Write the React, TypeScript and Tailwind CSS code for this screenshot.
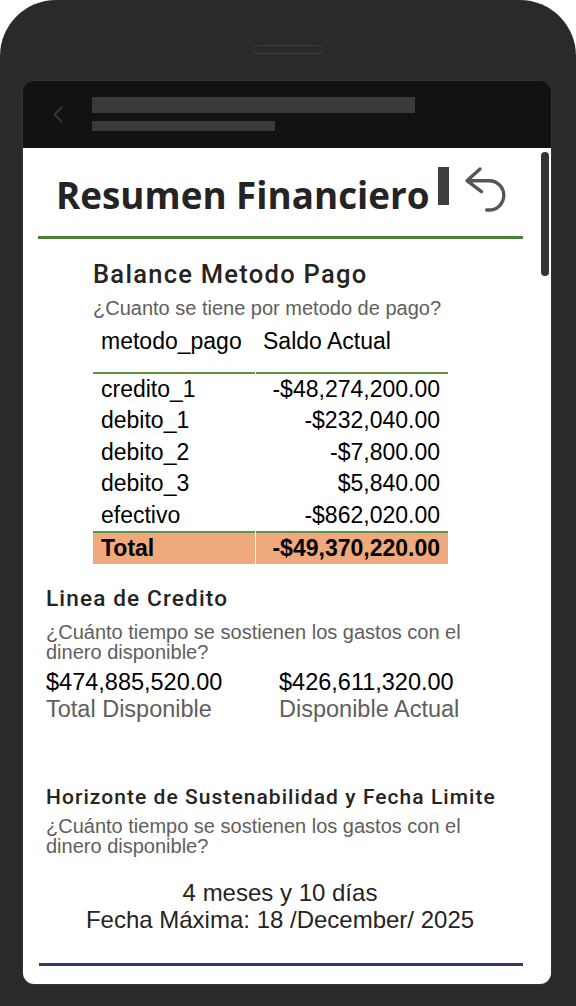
import React from "react";

const rows: [string, string][] = [
  ["credito_1", "-$48,274,200.00"],
  ["debito_1", "-$232,040.00"],
  ["debito_2", "-$7,800.00"],
  ["debito_3", "$5,840.00"],
  ["efectivo", "-$862,020.00"],
];

const din = "font-['Roboto',sans-serif] font-medium tracking-[0.05em] text-[#252423]";
const arial = "font-['Liberation_Sans',Arial,sans-serif]";

const UndoIcon: React.FC = () => (
  <svg width="44" height="48" viewBox="0 0 44 48" fill="none" className="-mt-[2px] ml-[15px]">
    <path
      d="M16 4 L3 15.7 L17.5 26.7 M3 15.7 H26.3 A14.7 14.7 0 0 1 26.3 45 H22.7"
      stroke="#555555"
      strokeWidth="3.4"
      strokeLinecap="round"
      strokeLinejoin="round"
    />
  </svg>
);

const App: React.FC = () => {
  return (
    <div className="w-[576px] h-[1006px] bg-white overflow-hidden">
      <div className="h-full bg-[#2a2a2a] rounded-t-[56px] pt-[45px] flex flex-col">
        <div className="mx-auto w-[70px] h-[9px] rounded-full border border-[#3b3b3b]" />

        <div className="mt-[26px] ml-[22px] w-[530px] h-[905px] rounded-[12px] overflow-hidden border border-[#333] flex flex-col">
          {/* app bar */}
          <div className="h-[67px] bg-[#121212] flex items-start">
            <div className="w-[69px] pl-[30px] pt-[25px]">
              <svg width="10" height="17" viewBox="0 0 10 17" fill="none">
                <path d="M9 1 L1.5 8.5 L9 16" stroke="#3d3d3d" strokeWidth="1.6" />
              </svg>
            </div>
            <div className="pt-[16px] flex flex-col gap-[8px]">
              <div className="w-[323px] h-[16px] bg-[#3a3a3a]" />
              <div className="w-[183px] h-[10px] bg-[#3a3a3a]" />
            </div>
          </div>

          {/* report page */}
          <div className="relative flex-1 bg-white">
            <div className="absolute right-[2px] top-[4px] w-[8px] h-[124px] rounded-full bg-[#333]" />

            <div className="pt-[19px] pl-[33px] flex items-start">
              <h1 className="w-[382px] whitespace-nowrap font-['Open_Sans','Noto_Sans',sans-serif] font-bold text-[36.8px] leading-[56px] text-[#252423]">
                Resumen Financiero
              </h1>
              <div className="w-[11px] h-[38px] bg-[#3f3f3f]" />
              <UndoIcon />
            </div>
            <div className="mt-[13px] ml-[15px] w-[485px] h-[3px] bg-[#4a7f37]" />

            {/* Balance */}
            <div className="ml-[70px] mt-[20px]">
              <h2 className={`${din} text-[25.5px] leading-[30px]`}>Balance Metodo Pago</h2>
              <p className={`${arial} mt-[7px] text-[20px] leading-[24px] text-[#605e5c]`}>
                ¿Cuanto se tiene por metodo de pago?
              </p>
              <div className={`${arial} mt-[5px] w-[355px] grid grid-cols-[162px_192px] gap-x-px text-[23px] text-black`}>
                <div className="h-[49px] leading-[32px] pl-[8px] border-b-2 border-[#5f9343]">metodo_pago</div>
                <div className="h-[49px] leading-[32px] pl-[7px] border-b-2 border-[#5f9343]">Saldo Actual</div>
                {rows.map(([name, value]) => (
                  <React.Fragment key={name}>
                    <div className="leading-[31.4px] pl-[8px]">{name}</div>
                    <div className="leading-[31.4px] pr-[8px] text-right">{value}</div>
                  </React.Fragment>
                ))}
                <div className="h-[33px] leading-[31px] pl-[8px] font-bold bg-[#efa97c] border-t-2 border-[#5f9343]">
                  Total
                </div>
                <div className="h-[33px] leading-[31px] pr-[8px] text-right font-bold bg-[#efa97c] border-t-2 border-[#5f9343]">
                  -$49,370,220.00
                </div>
              </div>
            </div>

            {/* Linea de credito */}
            <div className="ml-[23px] mt-[22px]">
              <h2 className={`${din} text-[22.6px] leading-[26px]`}>Linea de Credito</h2>
              <p className={`${arial} mt-[10px] w-[440px] text-[20px] leading-[20px] text-[#605e5c]`}>
                ¿Cuánto tiempo se sostienen los gastos con el dinero disponible?
              </p>
              <div className={`${arial} mt-[7px] grid grid-cols-[233px_auto] text-[23.5px] leading-[27px]`}>
                <div className="text-black">$474,885,520.00</div>
                <div className="text-black">$426,611,320.00</div>
                <div className="text-[#605e5c]">Total Disponible</div>
                <div className="text-[#605e5c]">Disponible Actual</div>
              </div>
            </div>

            {/* Horizonte */}
            <div className="ml-[23px] mt-[61px] w-[468px]">
              <h2 className={`${din} text-[21px] leading-[26px] whitespace-nowrap`}>Horizonte de Sustenabilidad y Fecha Limite</h2>
              <p className={`${arial} mt-[6px] w-[440px] text-[20px] leading-[20px] text-[#605e5c]`}>
                ¿Cuánto tiempo se sostienen los gastos con el dinero disponible?
              </p>
              <div className={`${arial} mt-[23px] text-center text-[24px] leading-[27px] text-[#252423]`}>
                <div>4 meses y 10 días</div>
                <div>Fecha Máxima: 18 /December/ 2025</div>
              </div>
            </div>
            <div className="mt-[30px] ml-[16px] w-[484px] h-[3px] bg-[#2f3c6d]" />
          </div>
        </div>
      </div>
    </div>
  );
};

export default App;
